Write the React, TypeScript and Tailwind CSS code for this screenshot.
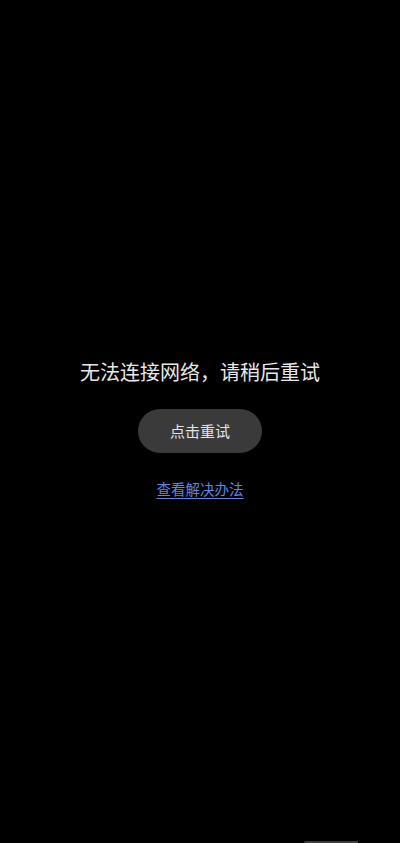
export default function App() {
  return (
    <div
      className="flex h-[843px] w-full flex-col items-center bg-black"
      style={{ fontFamily: '"Noto Sans CJK SC", "Noto Sans", sans-serif' }}
    >
      <p className="mt-[358px] text-[20px] leading-[28px] text-[#e8e8e8]">
        无法连接网络，请稍后重试
      </p>
      <button
        type="button"
        className="mt-[23px] h-[44px] w-[124px] rounded-full bg-[#3a3a3a] text-[15px] text-[#e4e4e4]"
      >
        点击重试
      </button>
      <a
        href="#"
        className="mt-[26px] text-[14.5px] leading-[20px] text-[#6284e6] underline underline-offset-[3px]"
      >
        查看解决办法
      </a>
      <div className="mt-auto flex w-full justify-end pr-[42px]">
        <div className="h-[2px] w-[54px] rounded-tl-full bg-[#3c3c3c]" />
      </div>
    </div>
  );
}
